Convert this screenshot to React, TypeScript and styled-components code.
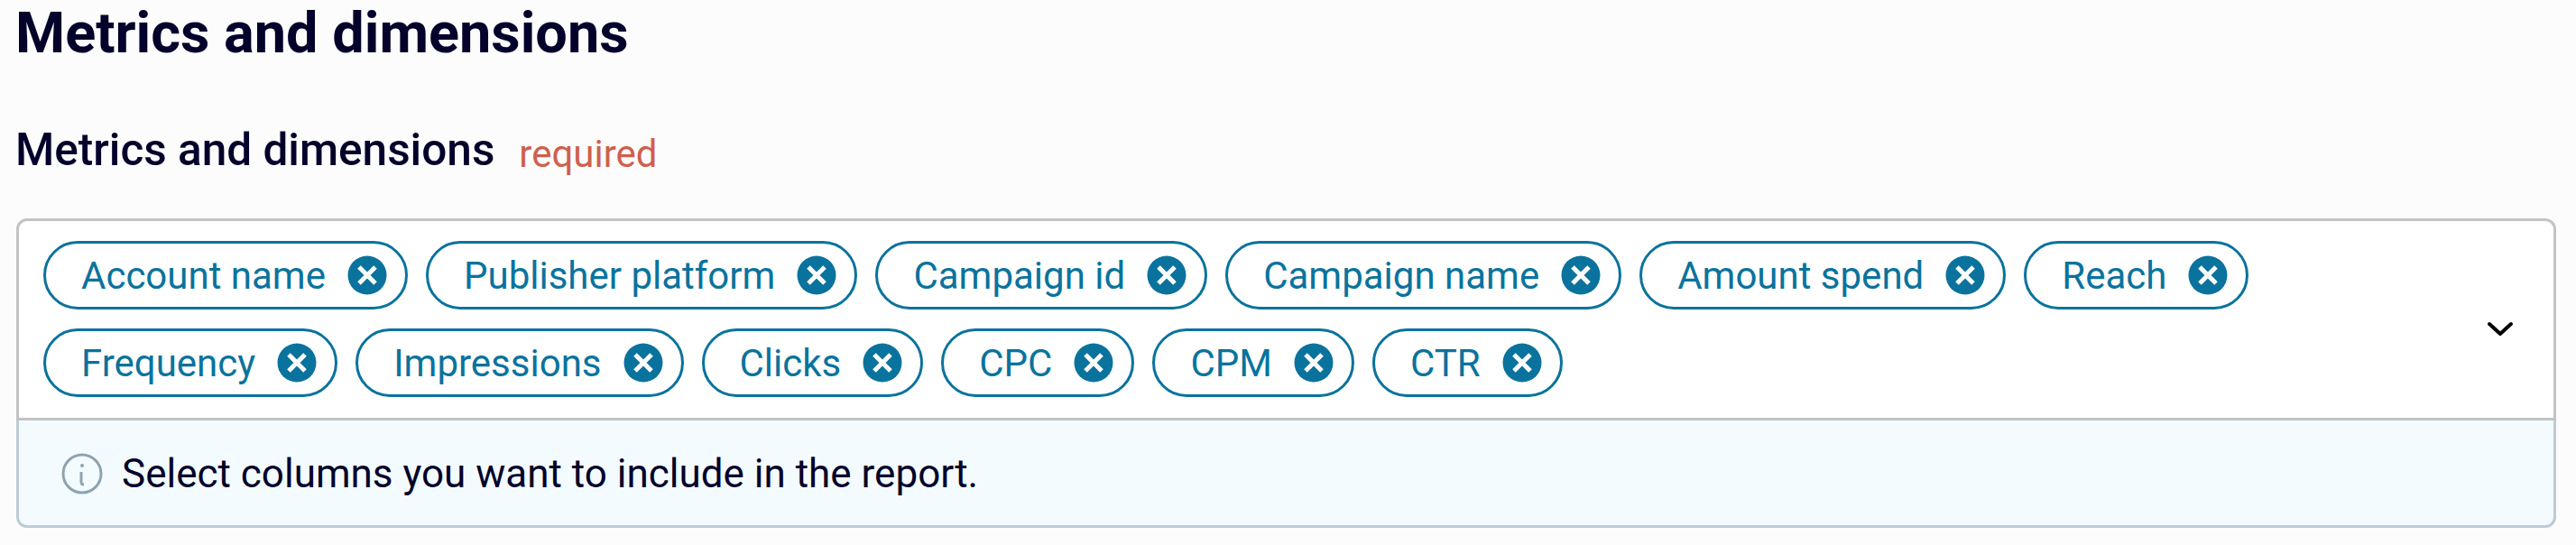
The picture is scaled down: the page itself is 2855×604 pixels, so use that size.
import React from 'react';
import styled, { createGlobalStyle } from 'styled-components';

const chips = [
  ['Account name', 'Publisher platform', 'Campaign id', 'Campaign name', 'Amount spend', 'Reach'],
  ['Frequency', 'Impressions', 'Clicks', 'CPC', 'CPM', 'CTR'],
];

const GlobalStyle = createGlobalStyle`
  html, body {
    margin: 0;
    background: #fcfcfc;
  }
`;

const Page = styled.div`
  width: 2855px;
  height: 604px;
  box-sizing: border-box;
  padding: 0 22px 0 18px;
  font-family: Roboto, 'Liberation Sans', sans-serif;
  color: #03022b;
  overflow: hidden;
`;

const Title = styled.h2`
  margin: 0 0 52px -1px;
  height: 74px;
  line-height: 74px;
  font-size: 63px;
  font-weight: 700;
`;

const LabelRow = styled.div`
  display: flex;
  align-items: baseline;
  gap: 27px;
  height: 78px;
  margin: 0 0 38px -1px;
  line-height: 80px;
`;

const Label = styled.span`
  font-size: 49.5px;
  font-weight: 500;
`;

const Required = styled.span`
  position: relative;
  top: 2px;
  font-size: 42px;
  color: #cf5f4e;
`;

const Field = styled.div`
  height: 343px;
  display: flex;
  flex-direction: column;
`;

const Control = styled.div`
  height: 224px;
  flex: none;
  box-sizing: border-box;
  padding: 22px 30px 0 27px;
  display: flex;
  justify-content: space-between;
  align-items: center;
  background: #fff;
  border: 3px solid #c3c3c3;
  border-radius: 12px 12px 0 0;
`;

const ChipRows = styled.div`
  align-self: flex-start;
  display: flex;
  flex-direction: column;
  gap: 21px;
`;

const ChipRow = styled.div`
  display: flex;
  gap: 20px;
`;

const Chip = styled.div`
  height: 76px;
  box-sizing: border-box;
  border: 3px solid #0a739d;
  border-radius: 38px;
  padding: 0 20px 0 39px;
  display: flex;
  align-items: center;
  gap: 24px;
  font-size: 42px;
  color: #0a739d;
  white-space: nowrap;
`;

const Chevron = styled.svg`
  width: 30px;
  height: 18px;
  margin-right: 14px;
`;

const Hint = styled.div`
  flex: 1;
  box-sizing: border-box;
  background: #f3fbff;
  border: 3px solid #bdccd4;
  border-top: none;
  border-radius: 0 0 12px 12px;
  display: flex;
  align-items: center;
  gap: 21px;
  padding: 2px 0 0 47px;
  font-size: 44px;
`;

const CloseIcon = () => (
  <svg width="44" height="44" viewBox="0 0 44 44" style={{ flex: 'none' }}>
    <circle cx="22" cy="22" r="21.5" fill="#0a739d" />
    <path d="M13 13 31 31M31 13 13 31" stroke="#fff" strokeWidth="5" />
  </svg>
);

const InfoIcon = () => (
  <svg width="46" height="46" viewBox="0 0 46 46" style={{ flex: 'none' }}>
    <circle cx="23" cy="23" r="21" fill="none" stroke="#8fa3ae" strokeWidth="3" />
    <circle cx="23" cy="14" r="2" fill="#8fa3ae" />
    <path d="M22 21v11c0 2 1 3 3 3" fill="none" stroke="#8fa3ae" strokeWidth="3" />
  </svg>
);

export default function App() {
  return (
    <Page>
      <GlobalStyle />
      <Title>Metrics and dimensions</Title>
      <LabelRow>
        <Label>Metrics and dimensions</Label>
        <Required>required</Required>
      </LabelRow>
      <Field>
        <Control>
          <ChipRows>
            {chips.map((row, i) => (
              <ChipRow key={i}>
                {row.map((name) => (
                  <Chip key={name}>
                    {name}
                    <CloseIcon />
                  </Chip>
                ))}
              </ChipRow>
            ))}
          </ChipRows>
          <Chevron viewBox="0 0 30 18">
            <path d="M3 3 15 14 27 3" fill="none" stroke="#000" strokeWidth="4" strokeLinecap="round" strokeLinejoin="round" />
          </Chevron>
        </Control>
        <Hint>
          <InfoIcon />
          Select columns you want to include in the report.
        </Hint>
      </Field>
    </Page>
  );
}
